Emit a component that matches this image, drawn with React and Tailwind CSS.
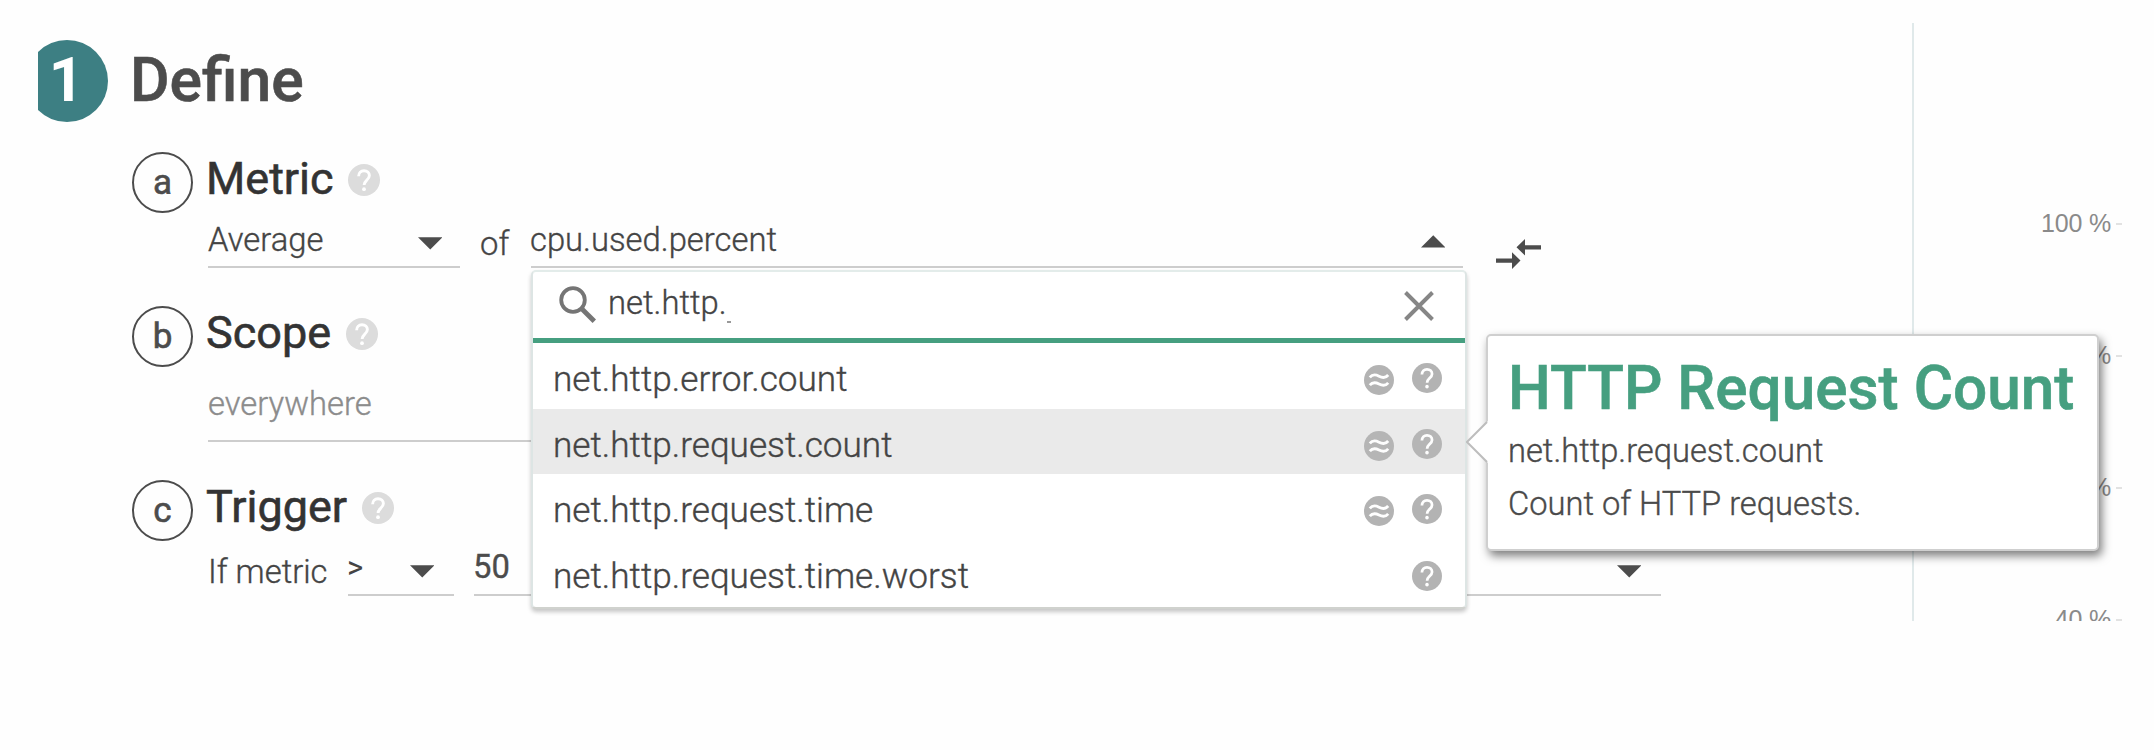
const METRICS = [
  { name: "net.http.error.count", aggregated: true },
  { name: "net.http.request.count", aggregated: true, active: true },
  { name: "net.http.request.time", aggregated: true },
  { name: "net.http.request.time.worst", aggregated: false },
];

function HelpIcon({ className }) {
  return (
    <svg viewBox="0 0 32 32" className={className}>
      <circle cx="16" cy="16" r="16" fill="currentColor" />
      <path
        d="M10.6 12.2c0-3.4 2.3-5.5 5.4-5.5s5.4 2 5.4 4.9c0 2.1-1.2 3.3-2.7 4.7-1.6 1.5-2.6 2.4-2.6 4.8"
        fill="none"
        stroke="#fff"
        strokeWidth="2.9"
      />
      <circle cx="16" cy="25.2" r="1.9" fill="#fff" />
    </svg>
  );
}

function ApproxIcon() {
  return (
    <svg viewBox="0 0 30 30" className="h-[30px] w-[30px] text-[#b3b3b3]">
      <circle cx="15" cy="15" r="15" fill="currentColor" />
      <path
        d="M5.8 12.4c2.6-3.2 5.4-3.2 9.2-1.2s6.6 2 9.2-1.2M5.8 20.2c2.6-3.2 5.4-3.2 9.2-1.2s6.6 2 9.2-1.2"
        fill="none"
        stroke="#fff"
        strokeWidth="2.8"
      />
    </svg>
  );
}

function Caret({ up, className = "" }) {
  return (
    <svg viewBox="0 0 24 12" className={`h-[12.5px] w-[24.5px] shrink-0 text-[#4c4c4c] ${className}`}>
      <path d={up ? "M0 12 12 0l12 12z" : "M0 0h24L12 12z"} fill="currentColor" />
    </svg>
  );
}

function SectionHeading({ letter, title }) {
  return (
    <div className="flex h-[54px]">
      <div className="-mt-[0.5px] ml-[94px] flex h-[61px] w-[61px] shrink-0 items-center justify-center rounded-full border-[2.5px] border-[#4c4c4c] text-[35px] leading-[61px] text-[#4c4c4c] [-webkit-text-stroke:0.6px]">
        {letter}
      </div>
      <h2 className="ml-[13px] text-[45px] leading-[53px] text-[#333] [-webkit-text-stroke:0.6px]">{title}</h2>
      <HelpIcon className="mt-[12px] ml-[14.5px] h-[32px] w-[32px] text-[#dcdcdc]" />
    </div>
  );
}

function Tooltip() {
  return (
    <div className="absolute top-[-75px] left-[953px] z-20 h-[217px] w-[613px] rounded-[5px] border-2 border-[#cfcfcf] bg-white pt-[20px] pl-[20px] whitespace-nowrap shadow-[3px_5px_10px_rgba(0,0,0,0.5)]">
      <svg viewBox="0 0 22 42" className="absolute top-[85px] left-[-22px] h-[42px] w-[22px]">
        <path d="M22 0 1 21l21 21z" fill="#fff" />
        <path d="M21 1 1 21l20 20" fill="none" stroke="#bdbdbd" strokeWidth="2" />
      </svg>
      <h3 className="text-[60.3px] leading-[66px] font-medium text-[#469f80] [-webkit-text-stroke:0.6px]">
        HTTP Request Count
      </h3>
      <p className="mt-[3px] text-[32.7px] leading-[53px] font-light text-[#4a4a4a]">net.http.request.count</p>
      <p className="text-[32.7px] leading-[53px] font-light text-[#4a4a4a]">Count of HTTP requests.</p>
    </div>
  );
}

function MetricMenu() {
  return (
    <div className="absolute top-[64px] left-0 z-10 h-[339px] w-[936px] rounded-[5px] border-2 border-t-[#e3ecea] border-r-[#dde5e4] border-b-[#d0d2ce] border-l-[#dde5e4] bg-white shadow-[0_3px_4px_rgba(0,0,0,0.22)]">
      <div className="flex h-[71px] items-start border-b-[5.5px] border-[#469f80]">
        <svg viewBox="0 0 37 37" className="mt-[14px] ml-[25.5px] h-[37px] w-[37px] text-[#757575]">
          <circle cx="14" cy="14" r="11.8" fill="none" stroke="currentColor" strokeWidth="3.8" />
          <path d="m22.5 22.5 12.8 12.8" stroke="currentColor" strokeWidth="4.8" />
        </svg>
        <span className="mt-[11px] ml-[12.5px] text-[32.8px] leading-[40px] text-[#444]">net.http.</span>
        <span className="mt-[49px] h-[2px] w-[4px] bg-[#999]" />
        <svg viewBox="0 0 30 30" className="mt-[18.5px] mr-[31px] ml-auto h-[30px] w-[30px] text-[#868686]">
          <path d="m1.500 1.500 27 27m0-27-27 27" stroke="currentColor" strokeWidth="3.9" />
        </svg>
      </div>
      <ul>
        {METRICS.map((m) => (
          <li
            key={m.name}
            className={
              m.active
                ? "relative flex h-[65.6px] items-center bg-[#eaeaea] pr-[23px] pl-[20px]"
                : "relative flex h-[65.6px] items-center pr-[23px] pl-[20px]"
            }
          >
            <span className="grow pt-[7px] text-[35.2px] leading-[58px] text-[#444]">{m.name}</span>
            <span className={m.active ? "flex gap-[18px] opacity-95" : "flex gap-[18px]"}>
              {m.aggregated && (
                <span className="mt-[9px]">
                  <ApproxIcon />
                </span>
              )}
              <HelpIcon className="mt-[7px] h-[30px] w-[30px] text-[#b3b3b3]" />
            </span>
            {m.active && <Tooltip />}
          </li>
        ))}
      </ul>
    </div>
  );
}

function ChartAxis() {
  return (
    <aside className="h-[598px] grow overflow-hidden border-l-2 border-[#e0e9ea] pt-[134.5px]">
      {["100 %", "80 %", "60 %", "40 %"].map((label) => (
        <div
          key={label}
          className="flex h-[132px] items-center justify-end gap-[5px] pr-[32px] font-['Liberation_Sans',sans-serif] text-[25px] tracking-[-0.2px] text-[#8a8a8a]"
        >
          {label}
          <span className="h-[2px] w-[6px] bg-[#e2e2e2]" />
        </div>
      ))}
    </aside>
  );
}

export default function App() {
  return (
    <div className="flex h-[750px] w-[2154px] overflow-hidden bg-[#fefefe] pt-[23px] pl-[38px] font-[Roboto,sans-serif]">
      <main className="w-[1874px] shrink-0 pt-[17px]">
        <header className="flex h-[82px]">
          <div className="w-[69.5px] overflow-hidden">
            <div className="-ml-[12px] flex h-[81.5px] w-[81.5px] items-center justify-center rounded-full bg-[#3d7f83] text-[61px] leading-[80px] font-bold text-white">
              <span className="-mt-[1px] -ml-[1px]">1</span>
            </div>
          </div>
          <h1 className="ml-[22.5px] text-[60.6px] leading-[81px] font-medium text-[#4c4c4c] [-webkit-text-stroke:0.6px]">
            Define
          </h1>
        </header>

        <section className="mt-[30px] h-[154px]">
          <SectionHeading letter="a" title="Metric" />
          <div className="flex pl-[170px] text-[32.8px] leading-[40px] font-light text-[#444] [-webkit-text-stroke:0.35px]">
            <div className="flex h-[62px] w-[252px] border-b-[2.5px] border-[#cdcdcd] pt-[14px]">
              <span>Average</span>
              <Caret className="mt-[17px] mr-[18px] ml-auto" />
            </div>
            <span className="mt-[18px] ml-[20px] w-[51px]">of</span>
            <div className="relative flex h-[62px] w-[932px] border-b-[2.5px] border-[#cdcdcd] pt-[14px]">
              <span className="-ml-[1px]">cpu.used.percent</span>
              <Caret up className="mt-[15px] mr-[18px] ml-auto" />
              <MetricMenu />
            </div>
            <svg viewBox="0 0 45 30" className="mt-[33px] ml-[33px] h-[30px] w-[45px] text-[#4c4c4c]">
              <path
                d="M0 19.5h16v-6.3l8.5 8.4-8.5 8.4v-6.3H0zM45 6.2H29V0l-8.5 8.2L29 16.4v-6h16z"
                fill="currentColor"
              />
            </svg>
          </div>
        </section>

        <section className="h-[174px]">
          <SectionHeading letter="b" title="Scope" />
          <div className="ml-[170px] h-[82px] w-[1240px] border-b-[2.5px] border-[#cdcdcd] pt-[24px] text-[32.8px] leading-[40px] font-light text-[#8c8c8c] [-webkit-text-stroke:0.35px]">
            everywhere
          </div>
        </section>

        <section>
          <SectionHeading letter="c" title="Trigger" />
          <div className="flex pl-[170px] text-[32.8px] leading-[40px] text-[#444] [-webkit-text-stroke:0.35px]">
            <span className="mt-[18px] w-[140px] font-light">If metric</span>
            <div className="flex h-[62px] w-[106px] border-b-[2.5px] border-[#cdcdcd] pt-[13px]">
              <span className="-ml-[1px] pt-[1px] text-[31px] [-webkit-text-stroke:0px]">&gt;</span>
              <Caret className="mt-[18px] mr-[20px] ml-auto" />
            </div>
            <div className="ml-[20px] flex h-[62px] w-[1187px] border-b-[2.5px] border-[#cdcdcd] pt-[13px] text-[#4c4c4c]">
              <span className="-ml-[1px]">50</span>
              <Caret className="mt-[18px] mr-[20px] ml-auto" />
            </div>
          </div>
        </section>
      </main>
      <ChartAxis />
    </div>
  );
}
